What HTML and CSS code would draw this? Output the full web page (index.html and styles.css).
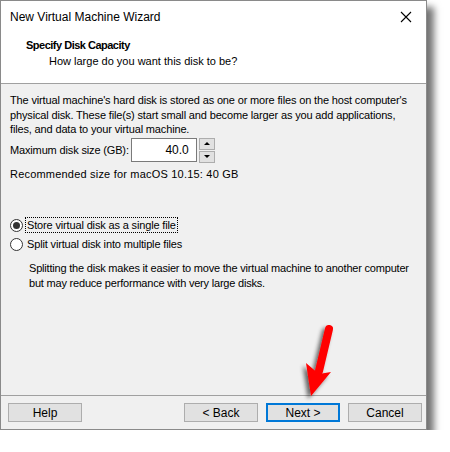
FILE: index.html
```html
<!DOCTYPE html>
<html lang="en">
<head>
    <meta charset="UTF-8">
    <title>New Virtual Machine Wizard</title>
    <link rel="stylesheet" href="styles.css">
</head>
<body>
    <div class="wizard">
        <div class="titlebar">
            <span class="title">New Virtual Machine Wizard</span>
            <svg class="close" width="12" height="12" viewBox="0 0 12 12">
                <path d="M1 1 L11 11 M11 1 L1 11" stroke="#000" stroke-width="1.1" fill="none"/>
            </svg>
        </div>
        <div class="header">
            <div class="step">Specify Disk Capacity</div>
            <div class="question">How large do you want this disk to be?</div>
        </div>

        <div class="content">
            <p class="intro">The virtual machine's hard disk is stored as one or more files on the host computer's physical disk. These file(s) start small and become larger as you add applications, files, and data to your virtual machine.</p>

            <div class="size-row">
                <label for="size">Maximum disk size (GB):</label>
                <div class="field">40.0</div>
                <div class="spinner">
                    <span class="spin up"></span>
                    <span class="spin down"></span>
                </div>
            </div>

            <p class="hint">Recommended size for macOS 10.15: 40 GB</p>

            <div class="options">
                <div class="radio-row">
                    <span class="radio checked"></span>
                    <span class="radio-label focused">Store virtual disk as a single file</span>
                </div>
                <div class="radio-row">
                    <span class="radio"></span>
                    <span class="radio-label">Split virtual disk into multiple files</span>
                </div>
                <p class="note">Splitting the disk makes it easier to move the virtual machine to another computer but may reduce performance with very large disks.</p>
            </div>
        </div>

        <div class="footer">
            <button class="btn">Help</button>
            <div class="nav">
                <button class="btn">&lt; Back</button>
                <button class="btn default">Next &gt;</button>
                <button class="btn">Cancel</button>
            </div>
        </div>

        <!-- red pointer over the Next button -->
        <svg class="pointer" width="60" height="90" viewBox="0 0 60 90">
            <defs>
                <filter id="drop" x="-50%" y="-50%" width="200%" height="200%">
                    <feGaussianBlur in="SourceAlpha" stdDeviation="2"/>
                    <feOffset dx="-3" dy="3"/>
                    <feComponentTransfer><feFuncA type="linear" slope="0.6"/></feComponentTransfer>
                    <feMerge><feMergeNode/><feMergeNode in="SourceGraphic"/></feMerge>
                </filter>
            </defs>
            <g filter="url(#drop)">
                <path d="M38 10 L28 52" stroke="#ff0000" stroke-width="8" stroke-linecap="round" fill="none"/>
                <path d="M15 44 L20 77 L40 53 L28 55 Z" fill="#ff0000"/>
            </g>
        </svg>
    </div>
</body>
</html>
```

FILE: styles.css
```css
/* Windows dialog look */
body {
    margin: 0;
    padding: 0;
    background: #fff;
    font-family: "Liberation Sans", Arial, sans-serif;
    font-size: 11px;
    color: #000;
}
.wizard {
    position: relative;
    width: 425px;
    height: 428px;
    border: 1px solid #8a8a8a;
    background: #f0f0f0;
    display: flex;
    flex-direction: column;
    box-shadow: 7px 7px 7px rgba(0, 0, 0, 0.55);
}
.titlebar {
    background: #fff;
    height: 31px;
    display: flex;
    align-items: center;
    justify-content: space-between;
    padding: 0 10px 0 9px;
    font-size: 12px;
}
.close {
    margin-right: 4px;
}
.header {
    background: #fff;
    height: 51px;
    border-bottom: 1px solid #a0a0a0;
    padding-left: 25px;
}
.step {
    font-weight: bold;
    font-size: 11px;
    letter-spacing: -0.5px;
    margin-top: 7px;
}
.question {
    margin-top: 4px;
    padding-left: 23px;
}
.content {
    flex: 1;
    padding: 9px 4px 0 9px;
    border-bottom: 1px solid #a0a0a0;
    letter-spacing: -0.15px;
}
.intro {
    margin: 0;
    max-width: 400px;
    line-height: 14.5px;
}
.size-row {
    display: flex;
    align-items: center;
    margin-top: 1px;
}
.field {
    width: 57px;
    height: 22px;
    border: 1px solid #7a7a7a;
    background: #fff;
    margin-left: 2px;
    text-align: right;
    line-height: 22px;
    padding-right: 7px;
    font-size: 12px;
    letter-spacing: 0;
}
.spinner {
    display: flex;
    flex-direction: column;
    gap: 1px;
    margin-left: 2px;
}
.spin {
    width: 14px;
    height: 10px;
    border: 1px solid #adadad;
    background: #e1e1e1;
    display: flex;
    align-items: center;
    justify-content: center;
}
.spin::after {
    content: "";
    border-left: 3px solid transparent;
    border-right: 3px solid transparent;
}
.up::after {
    border-bottom: 3px solid #000;
}
.down::after {
    border-top: 3px solid #000;
}
.hint {
    margin: 5px 0 0;
    letter-spacing: 0.2px;
}
.options {
    margin-top: 36px;
}
.radio-row {
    display: flex;
    align-items: center;
    height: 19px;
}
.radio {
    width: 11px;
    height: 11px;
    border: 1px solid #333;
    border-radius: 50%;
    background: #fff;
    margin: 0 2px 0 0;
    position: relative;
}
.radio.checked::after {
    content: "";
    position: absolute;
    left: 2px;
    top: 2px;
    width: 7px;
    height: 7px;
    border-radius: 50%;
    background: #333;
}
.radio-label {
    padding: 1px 1px;
    border: 1px dotted transparent;
}
.radio-label.focused {
    border-color: #000;
}
.note {
    margin: 7px 0 0 19px;
    line-height: 15px;
    letter-spacing: -0.2px;
}
.footer {
    height: 33px;
    display: flex;
    align-items: center;
    justify-content: space-between;
    padding: 0 4px 0 7px;
}
.nav {
    display: flex;
    gap: 8px;
}
.btn {
    width: 74px;
    height: 19px;
    border: 1px solid #adadad;
    background: #e1e1e1;
    font-family: inherit;
    font-size: 12px;
    padding: 0;
    color: #000;
}
.btn.default {
    border: 2px solid #0078d7;
}
.pointer {
    position: absolute;
    left: 290px;
    top: 318px;
}
```
